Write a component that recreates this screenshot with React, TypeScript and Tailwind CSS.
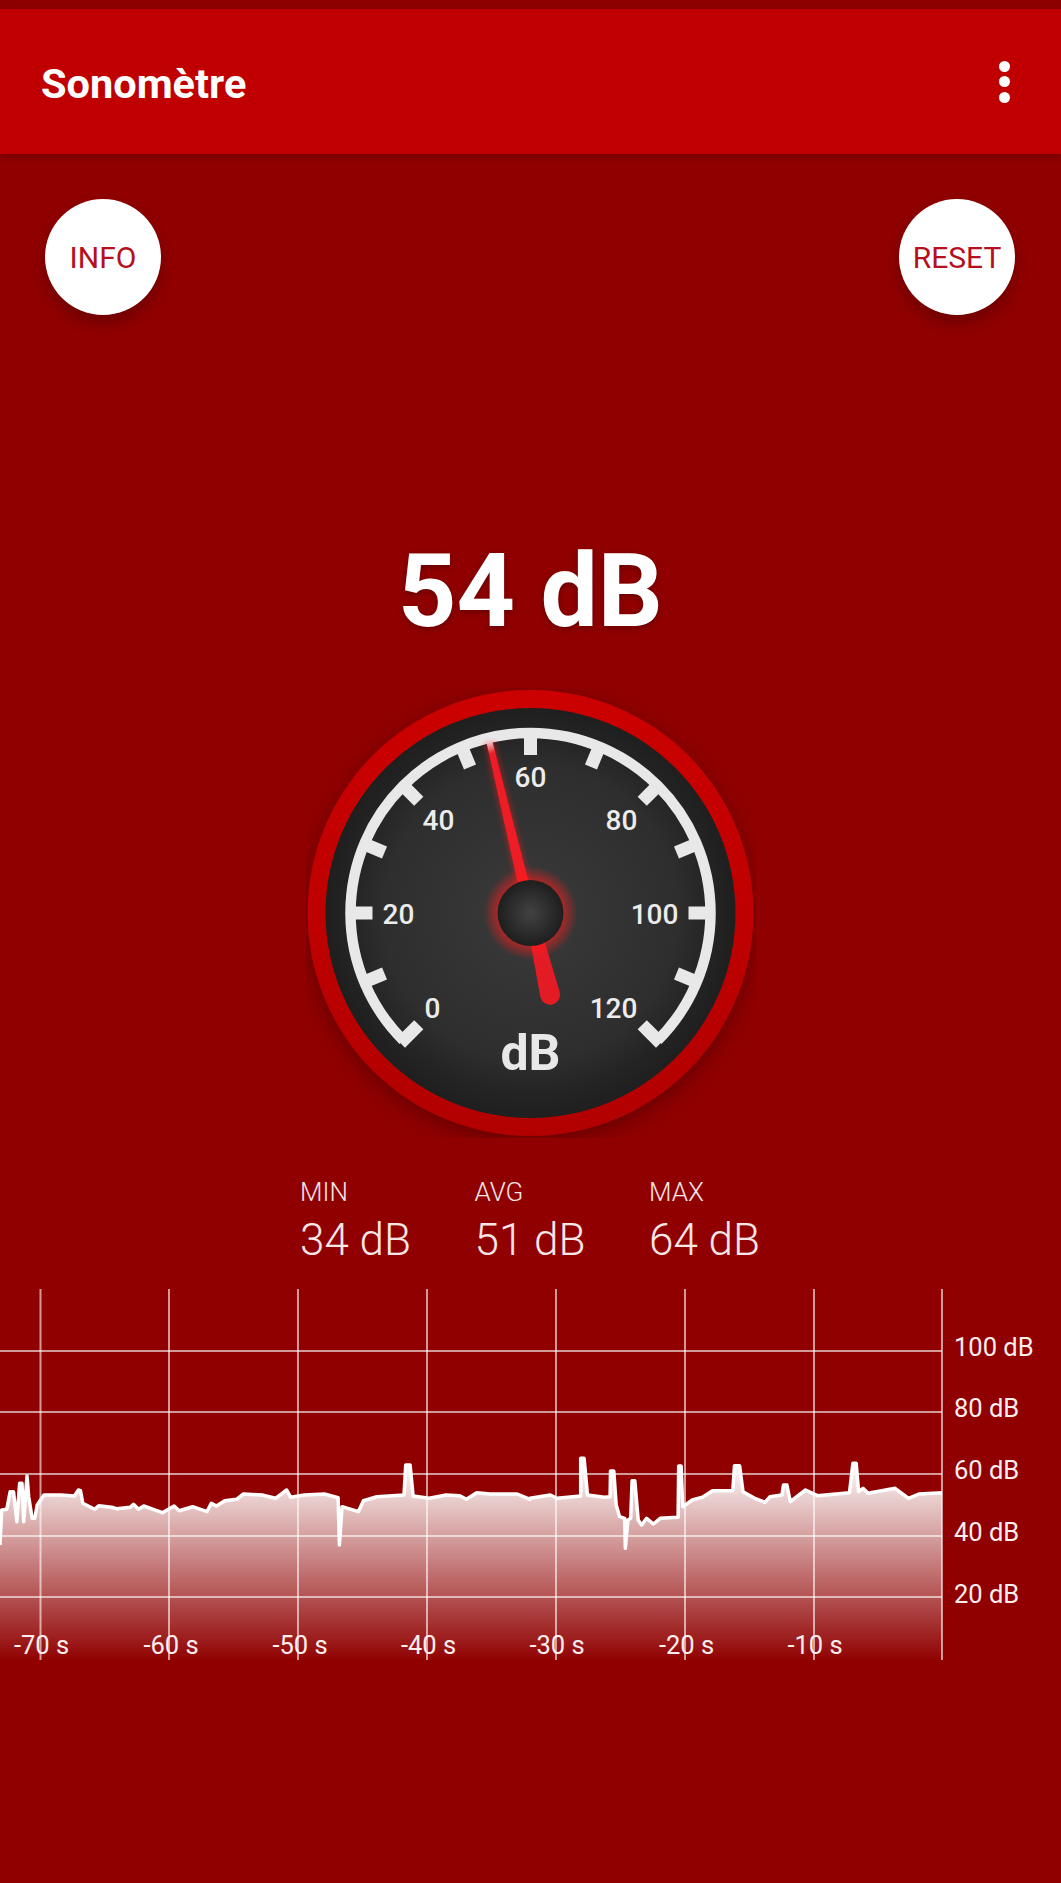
const FONT = 'font-["Roboto",sans-serif]';

// chart points read off the screenshot, in zoomed crop coords (crop was 2.958x wide, 3x high)
const SX = 2.958;
const LEFT = [[0,825],[5,720],[20,718],[30,665],[40,665],[50,755],[58,640],[65,640],[70,755],[80,618],[85,680],[95,745],[103,745],[110,705],[130,675],[180,675],[220,678],[232,660],[238,662],[245,700],[280,718],[292,707],[330,712],[345,716],[385,712],[395,703],[410,718],[425,708],[480,728],[515,708],[530,722],[570,710],[612,725],[625,700],[640,708],[665,692],[700,688],[720,672],[775,675],[815,685],[848,660],[860,682],[900,675],[960,672],[1000,683],[1004,825],[1012,710],[1060,725],[1075,692],[1115,680],[1195,675],[1200,585],[1213,585],[1222,678],[1270,685],[1320,675],[1360,677],[1380,688],[1410,668],[1450,672],[1530,672],[1568,688]];
const RIGHT = [[0,685],[60,675],[80,685],[150,678],[150,565],[160,565],[170,675],[220,682],[237,680],[238,603],[248,603],[255,705],[265,740],[280,745],[282,835],[290,750],[298,745],[302,632],[310,632],[320,750],[330,765],[345,745],[365,762],[385,745],[438,742],[440,588],[447,588],[452,710],[480,690],[510,682],[540,662],[600,662],[605,587],[620,587],[630,665],[665,685],[695,697],[710,680],[745,675],[750,645],[760,645],[770,695],[815,660],[850,677],[945,668],[955,580],[965,580],[972,665],[985,655],[1000,670],[1080,655],[1120,685],[1150,672],[1219,668]];

const linePoints = [
  ...LEFT.map(([x, y]) => `${(x / SX).toFixed(1)},${(1270 + y / 3).toFixed(1)}`),
  ...RIGHT.map(([x, y]) => `${(530 + x / SX).toFixed(1)},${(1270 + y / 3).toFixed(1)}`),
].join(' ');

const V_LINES = [40.5, 169, 298, 427, 556, 685, 814, 942];
const H_LINES = [1351, 1412, 1474, 1536, 1597];
const DB_LABELS = [['100 dB', 1347], ['80 dB', 1408], ['60 dB', 1470], ['40 dB', 1532], ['20 dB', 1594]] as const;
const TIME_LABELS = [['-70 s', 41.5], ['-60 s', 171], ['-50 s', 300], ['-40 s', 428.5], ['-30 s', 557], ['-20 s', 686.5], ['-10 s', 815]] as const;

const GAUGE_LABELS = [['0', -98, 95], ['20', -132, 1], ['40', -92, -93], ['60', 0, -136], ['80', 91, -93], ['100', 124, 1], ['120', 83, 95]] as const;
const TICK_ANGLES = Array.from({ length: 13 }, (_, i) => -135 + i * 22.5);

function polar(r: number, deg: number) {
  const a = (deg * Math.PI) / 180;
  return { x: r * Math.sin(a), y: -r * Math.cos(a) };
}

function Gauge() {
  const a = polar(180, -135);
  const b = polar(180, 135);
  return (
    <svg viewBox="-224.5 -225 450 450" className="block w-[450px] h-[450px] mx-auto mt-[46px]">
      <defs>
        <linearGradient id="ring" x1="0" y1="0" x2="0" y2="1">
          <stop offset="0" stopColor="#cc0000" />
          <stop offset="1" stopColor="#b20000" />
        </linearGradient>
        <radialGradient id="face">
          <stop offset="0" stopColor="#3a3a3a" />
          <stop offset="0.72" stopColor="#2e2e2e" />
          <stop offset="0.88" stopColor="#242424" />
          <stop offset="1" stopColor="#1f1f1f" />
        </radialGradient>
        <radialGradient id="hub">
          <stop offset="0" stopColor="#424242" />
          <stop offset="1" stopColor="#1e1e1e" />
        </radialGradient>
        <radialGradient id="glow">
          <stop offset="0.62" stopColor="#ff1c1c" stopOpacity="0.7" />
          <stop offset="1" stopColor="#ff1c1c" stopOpacity="0" />
        </radialGradient>
        <linearGradient id="tip" x1="0" y1="0" x2="0" y2="1">
          <stop offset="0" stopColor="#f4c8c8" />
          <stop offset="0.08" stopColor="#ee1c25" />
          <stop offset="1" stopColor="#ee1c25" />
        </linearGradient>
      </defs>

      <circle r="223" fill="url(#ring)" className="drop-shadow-[0_6px_10px_rgba(60,0,0,0.5)]" />
      <circle r="205" fill="url(#face)" />

      <path d={`M${a.x} ${a.y}A180 180 0 1 1 ${b.x} ${b.y}`} fill="none" stroke="#e8e8e8" strokeWidth="10.5" />
      {TICK_ANGLES.map(deg => {
        const p1 = polar(184, deg);
        const p2 = polar(158, deg);
        return <line key={deg} x1={p1.x} y1={p1.y} x2={p2.x} y2={p2.y} stroke="#e8e8e8" strokeWidth="13" />;
      })}

      {GAUGE_LABELS.map(([t, x, y]) => (
        <text key={t} x={x} y={y + 10} textAnchor="middle" fill="#ececec" className={`${FONT} text-[28px] font-medium`}>{t}</text>
      ))}
      <text x="0" y="157" textAnchor="middle" fill="#e8e8e8" className={`${FONT} text-[50px] font-bold`}>dB</text>

      <g transform="rotate(-13.5)">
        <path d="M-6 -176L6 -176L8 -28L-8 -28Z" fill="#ff1c1c" opacity="0.3" className="blur-[2px]" />
        <path d="M-3 -176L3 -176L5.5 -28L-5.5 -28Z" fill="url(#tip)" />
        <path d="M-6.5 20L6.5 20L10 84A10 10 0 0 1 -10 84Z" fill="#e21b25" />
      </g>
      <circle r="47" fill="url(#glow)" />
      <circle r="33" fill="url(#hub)" />
    </svg>
  );
}

function Chart() {
  return (
    <svg viewBox="0 1289 1061 373" className="block w-full h-[373px] mt-[25px]">
      <defs>
        <linearGradient id="area" gradientUnits="userSpaceOnUse" x1="0" y1="1470" x2="0" y2="1662">
          <stop offset="0" stopColor="#ffffff" stopOpacity="0.95" />
          <stop offset="1" stopColor="#ffffff" stopOpacity="0" />
        </linearGradient>
      </defs>
      <polygon points={`${linePoints} 942,1660 0,1660`} fill="url(#area)" />
      {H_LINES.map(y => <line key={y} x1="0" x2="942" y1={y} y2={y} stroke="#ffffff" strokeOpacity="0.6" strokeWidth="2" />)}
      {V_LINES.map(x => <line key={x} x1={x} x2={x} y1="1289" y2="1660" stroke="#ffffff" strokeOpacity="0.6" strokeWidth="2" />)}
      <polyline points={linePoints} fill="none" stroke="#ffffff" strokeWidth="3.5" strokeLinejoin="round" />
      {DB_LABELS.map(([t, y]) => (
        <text key={t} x="954" y={y + 9} fill="#fbeeee" className={`${FONT} text-[25.5px]`}>{t}</text>
      ))}
      {TIME_LABELS.map(([t, x]) => (
        <text key={t} x={x} y="1654" textAnchor="middle" fill="#fbeeee" className={`${FONT} text-[25.5px]`}>{t}</text>
      ))}
    </svg>
  );
}

function RoundButton({ label }: { label: string }) {
  return (
    <button className={`${FONT} w-[116px] h-[116px] rounded-full bg-white text-[#b5101c] text-[30px] flex items-center justify-center shadow-[0_8px_14px_rgba(60,0,0,0.4)]`}>
      {label}
    </button>
  );
}

export default function App() {
  return (
    <div className={`${FONT} w-full h-[1883px] bg-[#900000] overflow-hidden text-white`}>
      <div className="h-[9px] bg-[#8c0000]" />
      <header className="h-[145px] bg-[#c00000] flex items-center justify-between pl-[41px] pr-[51px] pt-[5px] shadow-[0_3px_6px_rgba(60,0,0,0.35)]">
        <h1 className="text-[41.5px] font-bold leading-none">Sonomètre</h1>
        <div className="flex flex-col gap-[4.5px] -mt-[5px]">
          <span className="w-[11px] h-[11px] rounded-full bg-white" />
          <span className="w-[11px] h-[11px] rounded-full bg-white" />
          <span className="w-[11px] h-[11px] rounded-full bg-white" />
        </div>
      </header>

      <div className="flex justify-between pl-[45px] pr-[46px] pt-[45px]">
        <RoundButton label="INFO" />
        <RoundButton label="RESET" />
      </div>

      <div className="mt-[225px] text-center text-[102px] font-bold leading-none drop-shadow-[0_2px_3px_rgba(60,0,0,0.5)]">54 dB</div>

      <Gauge />

      <div className="flex pl-[300px] mt-[39px] text-[#f6e6e6]">
        {[['MIN', '34 dB'], ['AVG', '51 dB'], ['MAX', '64 dB']].map(([k, v]) => (
          <div key={k} className="w-[174.5px]">
            <div className="text-[26px] font-light leading-[30px]">{k}</div>
            <div className="text-[44px] font-light leading-[48px] mt-[9px]">{v}</div>
          </div>
        ))}
      </div>

      <Chart />
    </div>
  );
}
